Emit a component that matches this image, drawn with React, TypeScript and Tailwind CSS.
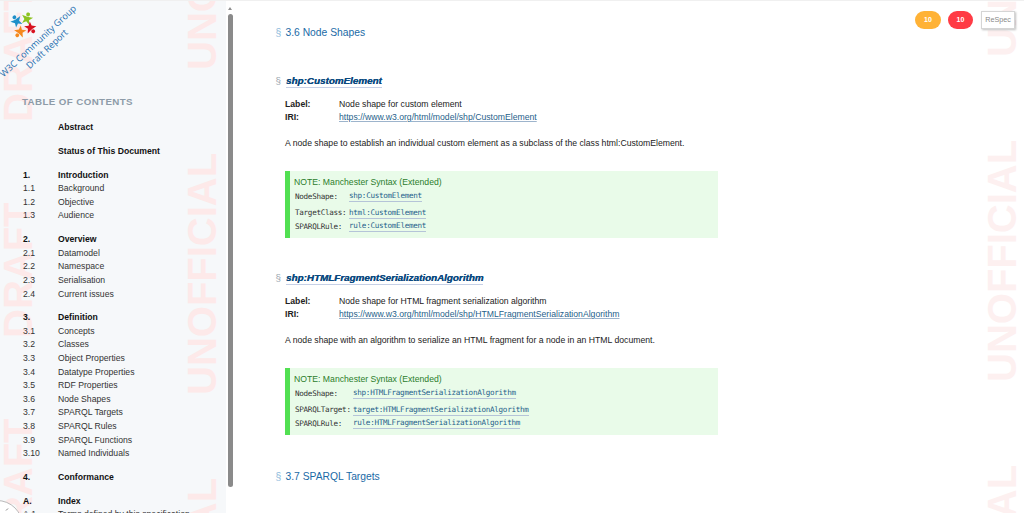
const sections = [
  { items: [["", "Abstract"]] },
  { items: [["", "Status of This Document"]] },
  {
    items: [
      ["1.", "Introduction"],
      ["1.1", "Background"],
      ["1.2", "Objective"],
      ["1.3", "Audience"],
    ],
  },
  {
    items: [
      ["2.", "Overview"],
      ["2.1", "Datamodel"],
      ["2.2", "Namespace"],
      ["2.3", "Serialisation"],
      ["2.4", "Current issues"],
    ],
  },
  {
    items: [
      ["3.", "Definition"],
      ["3.1", "Concepts"],
      ["3.2", "Classes"],
      ["3.3", "Object Properties"],
      ["3.4", "Datatype Properties"],
      ["3.5", "RDF Properties"],
      ["3.6", "Node Shapes"],
      ["3.7", "SPARQL Targets"],
      ["3.8", "SPARQL Rules"],
      ["3.9", "SPARQL Functions"],
      ["3.10", "Named Individuals"],
    ],
  },
  { items: [["4.", "Conformance"]] },
  {
    items: [
      ["A.", "Index"],
      ["A.1", "Terms defined by this specification"],
    ],
  },
];

function Person({ x, y, angle, color }: { x: number; y: number; angle: number; color: string }) {
  return (
    <g transform={`translate(${x} ${y}) rotate(${angle}) scale(0.92)`} fill={color}>
      <circle cx="0" cy="-4.6" r="2.1" />
      <path d="M-6.2 -2.6 C-3 -2.2 -1.5 -2 0 -2 C1.5 -2 3 -2.2 6.2 -2.6 L2.6 1.2 L4 6 L0 3.2 L-4 6 L-2.6 1.2 Z" />
    </g>
  );
}

function Logo() {
  return (
    <svg width="90" height="82" viewBox="0 0 90 82" className="block">
      <Person x={16.5} y={20} angle={-30} color="#1f8fc9" />
      <Person x={27} y={17.5} angle={15} color="#8cc21f" />
      <Person x={20} y={31} angle={-140} color="#f5891f" />
      <Person x={30.5} y={27} angle={140} color="#d8121f" />
      <text
        transform="translate(38.5 40.5) rotate(-43)"
        textAnchor="middle"
        dominantBaseline="middle"
        fontFamily="Open Sans, sans-serif"
        fontSize="9.1"
        fill="#1f6fb0"
      >
        W3C Community Group
      </text>
      <text
        transform="translate(47.5 48.5) rotate(-43)"
        textAnchor="middle"
        dominantBaseline="middle"
        fontFamily="Open Sans, sans-serif"
        fontSize="9.1"
        fill="#1f6fb0"
      >
        Draft Report
      </text>
    </svg>
  );
}

function Sidebar() {
  return (
    <aside className="relative flex h-full w-[234px] shrink-0 overflow-hidden">
      <div className="relative h-full w-[226px] shrink-0 overflow-hidden bg-[#f6f8fa]">
        {/* watermarks */}
        <div className="absolute left-[3px] top-[-95px] flex flex-col" aria-hidden="true">
          {[0, 1, 2, 3].map((i) => (
            <div key={i} className="h-[216px]">
              <div className="h-full rotate-180 text-[40px] font-bold leading-[30px] text-[#fde9e9] [writing-mode:vertical-rl]">
                DRAFT
              </div>
            </div>
          ))}
        </div>
        <div className="absolute left-[187px] top-[-256px] flex flex-col" aria-hidden="true">
          {[0, 1, 2].map((i) => (
            <div key={i} className="h-[325px]">
              <div className="h-full rotate-180 text-[40px] font-bold leading-[30px] text-[#fde9e9] [writing-mode:vertical-rl]">
                UNOFFICIAL
              </div>
            </div>
          ))}
        </div>

        <div className="relative">
          <Logo />
          <h2 className="ml-[22px] mt-[12px] text-[9.75px] font-bold leading-[14px] tracking-[0.39px] text-[#8d9ba8]">
            TABLE OF CONTENTS
          </h2>
          <nav className="mt-[12px] flex flex-col gap-[10.2px]">
            {sections.map((s, i) => (
              <ul key={i} className="flex flex-col">
                {s.items.map(([num, title], j) => (
                  <li
                    key={title}
                    className={`flex h-[13.6px] items-center text-[8.67px] leading-[13.6px] ${
                      j === 0 ? "font-bold text-[#111111]" : "text-[#333333]"
                    }`}
                  >
                    <span className="ml-[23px] w-[35px] shrink-0">{num}</span>
                    <span className="whitespace-nowrap">{title}</span>
                  </li>
                ))}
              </ul>
            ))}
          </nav>
        </div>
      </div>

      {/* scrollbar */}
      <div className="flex w-[8px] flex-col items-center bg-white pt-[6px]">
        <div className="h-0 w-0 border-x-[2.5px] border-b-[3px] border-x-transparent border-b-[#909090]" />
        <div className="mt-[4px] h-[473px] w-[5px] rounded-[3px] bg-[#8a8a8a]" />
      </div>

      {/* toc toggle */}
      <div className="absolute bottom-[-39px] left-[-29px] h-[52px] w-[52px] rounded-full border border-[#b9b9b9] bg-white" />
      <svg width="4" height="5" viewBox="0 0 4 5" className="absolute bottom-0 left-[5px]">
        <path d="M3 0.5 L1 2.5" stroke="#666666" strokeWidth="0.8" fill="none" />
      </svg>
    </aside>
  );
}

function Mono({ label, value, labelW }: { label: string; value: string; labelW: string }) {
  return (
    <div className="flex items-center whitespace-nowrap font-['DejaVu_Sans_Mono',monospace] text-[7.6px] tracking-[-0.29px]">
      <span className={`shrink-0 text-[#333333] ${labelW}`}>{label}</span>
      <span className="border-b border-[#b5c4d8] leading-[10px] text-[#1f5f8b]">{value}</span>
    </div>
  );
}

function NoteBox({
  rows,
  labelW,
}: {
  rows: { label: string; value: string }[];
  labelW: string;
}) {
  return (
    <div className="mt-[21px] h-[67px] w-[433px] border-l-[5px] border-[#52e052] bg-[#e9fbe9] pl-[4px] pt-[5px]">
      <div className="text-[8.67px] leading-[12px] text-[#2c7d2c]">NOTE: Manchester Syntax (Extended)</div>
      <div className="ml-[1px] mt-[3px] flex flex-col">
        {rows.map((r, i) => (
          <div key={r.label} className={i === 1 ? "mt-[5px]" : i === 2 ? "mt-[2.5px]" : ""}>
            <Mono label={r.label} value={r.value} labelW={labelW} />
          </div>
        ))}
      </div>
    </div>
  );
}

function Shape({
  name,
  label,
  iri,
  text,
  rows,
  labelW,
}: {
  name: string;
  label: string;
  iri: string;
  text: string;
  rows: { label: string; value: string }[];
  labelW: string;
}) {
  return (
    <section>
      <h4 className="-ml-[9.5px] flex h-[14px] items-center text-[9.85px] leading-[14px]">
        <span className="w-[10.5px] text-[#9aa5ae]">§</span>
        <span className="border-b border-[#c6d0e6] font-bold italic leading-[12px] text-[#0b4a80] [text-shadow:0.3px_0_0_#0b4a80]">
          {name}
        </span>
      </h4>
      <dl className="mt-[10px] text-[8.67px] leading-[13px] text-[#222222]">
        <div className="flex">
          <dt className="w-[54px] font-bold">Label:</dt>
          <dd>{label}</dd>
        </div>
        <div className="flex">
          <dt className="w-[54px] font-bold">IRI:</dt>
          <dd className="text-[#1f5f8b] underline decoration-[#9db4cc]">{iri}</dd>
        </div>
      </dl>
      <p className="mt-[13px] text-[8.67px] leading-[13px] text-[#222222]">{text}</p>
      <NoteBox rows={rows} labelW={labelW} />
    </section>
  );
}

function SectionTitle({ children }: { children: string }) {
  return (
    <h3 className="-ml-[9.5px] flex h-[16px] items-center text-[10.3px] leading-[16px] text-[#1a6aa6]">
      <span className="w-[10px] text-[#8fbbdc]">§</span>
      {children}
    </h3>
  );
}

export default function App() {
  return (
    <div className="flex h-[513px] w-[1024px] overflow-hidden border-t border-[#f0f0f0] bg-white font-['Liberation_Sans',sans-serif]">
      <Sidebar />
      <main className="relative h-full flex-1 overflow-hidden">
        <div className="absolute left-[753px] top-[-269px] flex flex-col" aria-hidden="true">
          {[0, 1, 2].map((i) => (
            <div key={i} className="h-[325px]">
              <div className="h-full rotate-180 text-[40px] font-bold leading-[30px] text-[#fdf0f0] [writing-mode:vertical-rl]">
                UNOFFICIAL
              </div>
            </div>
          ))}
        </div>

        <div className="relative pl-[51px] pt-[24px]">
          <SectionTitle>3.6 Node Shapes</SectionTitle>
          <div className="mt-[33px]">
            <Shape
              name="shp:CustomElement"
              label="Node shape for custom element"
              iri="https://www.w3.org/html/model/shp/CustomElement"
              text="A node shape to establish an individual custom element as a subclass of the class html:CustomElement."
              labelW="w-[54px]"
              rows={[
                { label: "NodeShape:", value: "shp:CustomElement" },
                { label: "TargetClass:", value: "html:CustomElement" },
                { label: "SPARQLRule:", value: "rule:CustomElement" },
              ]}
            />
          </div>
          <div className="mt-[33px]">
            <Shape
              name="shp:HTMLFragmentSerializationAlgorithm"
              label="Node shape for HTML fragment serialization algorithm"
              iri="https://www.w3.org/html/model/shp/HTMLFragmentSerializationAlgorithm"
              text="A node shape with an algorithm to serialize an HTML fragment for a node in an HTML document."
              labelW="w-[58px]"
              rows={[
                { label: "NodeShape:", value: "shp:HTMLFragmentSerializationAlgorithm" },
                { label: "SPARQLTarget:", value: "target:HTMLFragmentSerializationAlgorithm" },
                { label: "SPARQLRule:", value: "rule:HTMLFragmentSerializationAlgorithm" },
              ]}
            />
          </div>
          <div className="mt-[34px]">
            <SectionTitle>3.7 SPARQL Targets</SectionTitle>
          </div>
        </div>

        {/* pubrules badges */}
        <div className="absolute right-[9px] top-[10px] flex items-center">
          <div className="flex h-[18px] w-[26px] items-center justify-center rounded-full bg-[#ffb236] text-[7px] font-bold text-white">
            10
          </div>
          <div className="ml-[7px] flex h-[18px] w-[25px] items-center justify-center rounded-full bg-[#ff3b45] text-[7px] font-bold text-white">
            10
          </div>
          <div className="ml-[8px] flex h-[18px] w-[34px] items-center justify-center border border-[#d5d5d5] bg-white text-[7.2px] text-[#888888] shadow-[1px_1px_2px_rgba(0,0,0,0.25)]">
            ReSpec
          </div>
        </div>
      </main>
    </div>
  );
}
